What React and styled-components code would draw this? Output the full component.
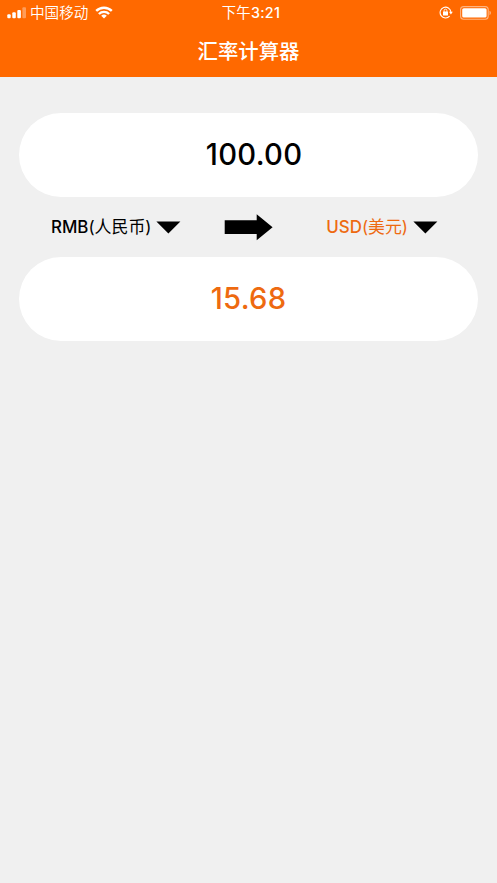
import React, { Component } from 'react';
import styled, { createGlobalStyle } from 'styled-components';

const GlobalStyle = createGlobalStyle`
    body {
        margin: 0;
        background: #f0f0f0;
        font-family: Inter, "Noto Sans CJK SC", sans-serif;
    }
`;

function SignalIcon() {
    return (
        <svg width="20" height="12" viewBox="0 0 20 12" fill="#fff">
            <rect x="0.3" y="7.2" width="3.4" height="4" rx="1" />
            <rect x="5.3" y="5.3" width="3.5" height="5.9" rx="1" />
            <rect x="10.3" y="3" width="3.6" height="8.2" rx="1" />
            <rect x="15.4" y="0.3" width="3.6" height="10.9" rx="1" opacity="0.35" />
        </svg>
    );
}

function WifiIcon() {
    return (
        <svg width="18" height="13" viewBox="0 0 18 13" fill="none" stroke="#fff" strokeWidth="2.4">
            <path d="M1.2 4.9A11.2 11.2 0 0 1 16.8 4.9" />
            <path d="M3.9 8A7.3 7.3 0 0 1 14.1 8" />
            <path d="M9 12.6L6.2 9.8A4 4 0 0 1 11.8 9.8Z" fill="#fff" stroke="none" />
        </svg>
    );
}

function LockIcon() {
    return (
        <svg width="14" height="13" viewBox="0 0 14 13" fill="none" stroke="#fff">
            <path d="M10.6 10.1A5.4 5.4 0 1 1 11.9 6" strokeWidth="1.1" />
            <path d="M10 5.7H13.8L11.9 8.4Z" fill="#fff" stroke="none" />
            <path d="M5.1 6V4.6A1.4 1.4 0 0 1 7.9 4.6V6" strokeWidth="0.9" />
            <rect x="4" y="5.6" width="5" height="3.8" rx="0.5" fill="#fff" stroke="none" />
        </svg>
    );
}

function BatteryIcon() {
    return (
        <svg width="32" height="14" viewBox="0 0 32 14">
            <rect x="0.6" y="0.6" width="27.6" height="12.6" rx="3" fill="none" stroke="#fff" strokeWidth="1.1" opacity="0.5" />
            <rect x="2.2" y="2.2" width="24.4" height="9.4" rx="1.6" fill="#fff" />
            <path d="M29.5 4.8A2.4 2.4 0 0 1 29.5 9.2Z" fill="#fff" opacity="0.5" />
        </svg>
    );
}

function DownIcon() {
    return (
        <svg width="25" height="13" viewBox="0 0 25 13">
            <path d="M0.4 0.5H24.4L12.4 12.4Z" />
        </svg>
    );
}

function ArrowIcon() {
    return (
        <svg width="49" height="27" viewBox="0 0 49 27">
            <path d="M0.7 6.3H32.7V0.2L48.6 13.2L32.7 26.3V20H0.7Z" />
        </svg>
    );
}

export default class App extends Component {
    state = { amount: '100.00', result: '15.68' };

    render() {
        return (
            <Screen>
                <GlobalStyle />
                <Header>
                    <StatusBar>
                        <Carrier>
                            <SignalIcon />
                            <CarrierName>中国移动</CarrierName>
                            <WifiIcon />
                        </Carrier>
                        <Clock><Regular>下午</Regular>3:21</Clock>
                        <StatusRight>
                            <LockIcon />
                            <BatteryIcon />
                        </StatusRight>
                    </StatusBar>
                    <Title>汇率计算器</Title>
                </Header>
                <Content>
                    <AmountBox $shift="11px">{this.state.amount}</AmountBox>
                    <CurrencyRow>
                        <Currency>
                            <CurrencyName>RMB<Regular>(人民币)</Regular></CurrencyName>
                            <DownIcon />
                        </Currency>
                        <Direction>
                            <ArrowIcon />
                        </Direction>
                        <Currency $end>
                            <CurrencyName $accent>USD<Regular>(美元)</Regular></CurrencyName>
                            <DownIcon />
                        </Currency>
                    </CurrencyRow>
                    <AmountBox $accent>{this.state.result}</AmountBox>
                </Content>
            </Screen>
        );
    }
}

const Screen = styled.div`
    min-height: 100vh;
    background: #f0f0f0;
    svg {
        display: block;
        flex: none;
    }
`;

const Header = styled.header`
    height: 77px;
    background: #ff6900;
    color: #fff;
`;

const StatusBar = styled.div`
    display: grid;
    grid-template-columns: 1fr auto 1fr;
    align-items: center;
    height: 25px;
    padding: 0 5px 0 7px;
`;

const Carrier = styled.div`
    display: flex;
    align-items: center;
`;

const CarrierName = styled.span`
    margin: 0 7px 0 3px;
    font-size: 14.6px;
    font-weight: 350;
    line-height: 24px;
`;

const Clock = styled.span`
    margin-left: 3px;
    font-size: 14.3px;
    font-weight: 500;
    letter-spacing: 0.3px;
    line-height: 24px;
`;

const Regular = styled.span`
    font-weight: 400;
`;

const StatusRight = styled.div`
    display: flex;
    align-items: center;
    justify-content: flex-end;
    gap: 7px;
`;

const Title = styled.h1`
    margin: 0;
    height: 52px;
    font-size: 20.4px;
    font-weight: 500;
    line-height: 53px;
    text-align: center;
`;

const Content = styled.main`
    padding: 36px 19px 0;
`;

const AmountBox = styled.div`
    height: 84px;
    padding-left: ${props => props.$shift || '0'};
    border-radius: 42px;
    background: #fff;
    color: ${props => (props.$accent ? '#ee6a10' : '#000')};
    font-size: 29.2px;
    font-weight: 550;
    letter-spacing: 0.3px;
    line-height: 84px;
    text-align: center;
`;

const CurrencyRow = styled.div`
    display: grid;
    grid-template-columns: 1fr auto 1fr;
    align-items: center;
    height: 60px;
    padding: 0 40px 0 32px;
`;

const Direction = styled.div`
    padding-left: 8px;
`;

const Currency = styled.div`
    display: flex;
    align-items: center;
    justify-content: ${props => (props.$end ? 'flex-end' : 'flex-start')};
    gap: 5px;
`;

const CurrencyName = styled.span`
    color: ${props => (props.$accent ? '#ee6a10' : '#000')};
    font-size: 16.9px;
    font-weight: 500;
    line-height: 26px;
    white-space: nowrap;
`;
